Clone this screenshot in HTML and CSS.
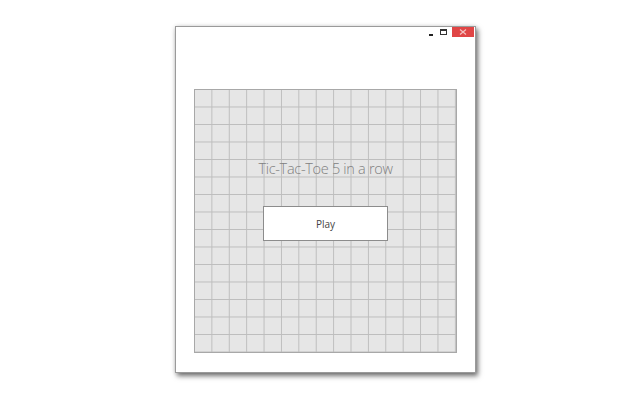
FILE: index.html
```html
<!DOCTYPE html>
<html>
<head>
<meta charset="utf-8">
<link rel="stylesheet" href="styles.css">
</head>
<body>
<div class="window">
  <div class="titlebar">
    <span class="ctl min"><span class="dash"></span></span>
    <span class="ctl max"><span class="box"></span></span>
    <span class="ctl close">
      <svg width="8" height="6" viewBox="0 0 8 6"><path d="M1 0.5 L7 5.5 M7 0.5 L1 5.5" stroke="#f4c0c0" stroke-width="1.2"/></svg>
    </span>
  </div>
  <div class="board">
    <div class="title">Tic-Tac-Toe 5 in a row</div>
    <button class="play">Play</button>
  </div>
</div>
</body>
</html>
```
FILE: styles.css
```css
html, body { margin: 0; padding: 0; background: #ffffff; }
body { width: 640px; height: 400px; overflow: hidden; font-family: "Open Sans", "Liberation Sans", sans-serif; }
.window {
  margin: 26px 0 0 175px;
  width: 299px;
  height: 345px;
  background: #fff;
  border: 1px solid #9a9a9a;
  box-shadow: 2px 3px 5px rgba(0,0,0,0.55), 0 0 4px rgba(0,0,0,0.12);
  display: flex;
  flex-direction: column;
}
.titlebar {
  height: 62px;
  display: flex;
  justify-content: flex-end;
  align-items: flex-start;
  padding-right: 1px;
}
.ctl { display: flex; align-items: center; justify-content: center; height: 10px; }
.min { width: 12px; }
.min .dash { display: block; width: 4px; height: 2px; background: #222; margin-top: 5px; }
.max { width: 12px; }
.max .box { display: block; width: 5px; height: 3px; border: 1px solid #333; border-top-width: 2px; margin-top: 0px; }
.close { width: 22px; background: #e04545; margin-left: 3px; }
.board {
  margin: 0 18px;
  height: 262px;
  border: 1px solid #a8a8a8;
  background-color: #e6e6e6;
  background-image:
    linear-gradient(to right, #bdbdbd 1px, transparent 1px),
    linear-gradient(to bottom, #bdbdbd 1px, transparent 1px);
  background-size: 17.4px 17.5px;
  background-position: -1px -1px;
  display: flex;
  flex-direction: column;
  align-items: center;
}
.title {
  margin-top: 69px;
  font-size: 14.5px;
  font-weight: 300;
  color: #808080;
  line-height: 20px;
  letter-spacing: -0.3px;
}
.play {
  margin-top: 27px;
  width: 125px;
  height: 35px;
  background: #fff;
  border: 1px solid #8c8c8c;
  border-radius: 0;
  font-family: "Open Sans", "Liberation Sans", sans-serif;
  font-size: 10px;
  color: #444;
  padding: 0;
}
```
